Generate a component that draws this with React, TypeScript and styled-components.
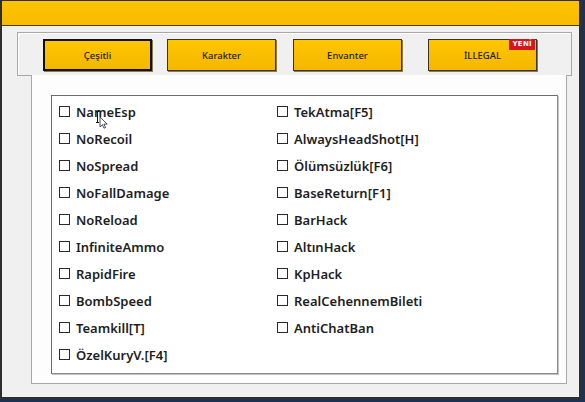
import styled, { createGlobalStyle } from 'styled-components';

const GlobalStyle = createGlobalStyle`
  html, body {
    margin: 0;
    padding: 0;
    background: #1f3153;
  }
  body {
    width: 585px;
    height: 402px;
    overflow: hidden;
    font-family: 'Noto Sans', 'DejaVu Sans', sans-serif;
  }
`;

type TabItem = { label: string; gap: number; active?: boolean; badge?: string };

const tabs: TabItem[] = [
  { label: 'Çeşitli', gap: 0, active: true },
  { label: 'Karakter', gap: 15 },
  { label: 'Envanter', gap: 17 },
  { label: 'İLLEGAL', gap: 26, badge: 'YENİ' },
];

const leftOptions = [
  'NameEsp',
  'NoRecoil',
  'NoSpread',
  'NoFallDamage',
  'NoReload',
  'InfiniteAmmo',
  'RapidFire',
  'BombSpeed',
  'Teamkill[T]',
  'ÖzelKuryV.[F4]',
];

const rightOptions = [
  'TekAtma[F5]',
  'AlwaysHeadShot[H]',
  'Ölümsüzlük[F6]',
  'BaseReturn[F1]',
  'BarHack',
  'AltınHack',
  'KpHack',
  'RealCehennemBileti',
  'AntiChatBan',
];

export default function App() {
  return (
    <>
      <GlobalStyle />
      <Window>
        <TitleBar />
        <Body>
          <TabHeader>
            {tabs.map((t) => (
              <TabButton key={t.label} $active={t.active} $gap={t.gap}>
                {t.label}
                {t.badge && <Badge>{t.badge}</Badge>}
              </TabButton>
            ))}
          </TabHeader>
          <Page>
            <Group>
              {[...leftOptions, ...rightOptions].map((name) => (
                <Option key={name}>
                  <Check />
                  <span>{name}</span>
                </Option>
              ))}
              {/* mouse pointer resting over the first option */}
              <Cursor width="14" height="20" viewBox="0 0 14 20">
                <path d="M1.5 1.5v11M0 1.5h3M0 12.5h3" stroke="#111" strokeWidth="1" fill="none" />
                <path d="M4 7v10l2.4-2.3 1.6 3.5 1.5-.7-1.6-3.4h3.3z" fill="#fff" stroke="#222" strokeWidth="0.8" />
              </Cursor>
            </Group>
          </Page>
        </Body>
      </Window>
    </>
  );
}

const Window = styled.div`
  box-sizing: border-box;
  width: 581px;
  height: 399px;
  display: flex;
  flex-direction: column;
  background: #f0f0f0;
  border: 2px solid #2e2e2e;
  border-top-width: 1px;
`;

const TitleBar = styled.div`
  height: 24px;
  flex: none;
  background: linear-gradient(#fec300, #f7bb00);
  border-bottom: 1px solid #4b3c10;
`;

const Body = styled.div`
  flex: 1;
  display: flex;
  flex-direction: column;
  padding: 6px 7px 13px 15px;
`;

const TabHeader = styled.div`
  box-sizing: border-box;
  height: 44px;
  flex: none;
  display: flex;
  align-items: flex-start;
  padding: 6px 0 0 25px;
  border: 1px solid #a8a8a8;
  box-shadow: inset 1px 1px 0 #ffffff;
`;

const TabButton = styled.div<{ $active?: boolean; $gap: number }>`
  position: relative;
  box-sizing: border-box;
  width: 109px;
  height: 32px;
  margin-left: ${({ $gap }) => $gap}px;
  display: flex;
  align-items: center;
  justify-content: center;
  background: linear-gradient(#ffc600, #f4b700);
  border: ${({ $active }) => ($active ? '2px solid #111' : '1px solid #3c3322')};
  box-shadow: 1px 1px 0 #8a7a50;
  font-size: 9.5px;
  font-weight: 500;
  color: #241d00;
`;

const Badge = styled.span`
  position: absolute;
  top: -1px;
  right: 1px;
  padding: 0 3px;
  height: 11px;
  line-height: 11px;
  background: #d6161c;
  color: #fff;
  font-family: 'DejaVu Sans', sans-serif;
  font-size: 7px;
  font-weight: bold;
  letter-spacing: 0.3px;
`;

const Page = styled.div`
  flex: 1;
  margin: -1px 5px 0 14px;
  display: flex;
  padding: 20px 8px 9px 19px;
  background: #fdfdfd;
  border: 1px solid #a8a8a8;
  border-top: none;
`;

const Group = styled.div`
  position: relative;
  flex: 1;
  display: grid;
  grid-template-columns: 218px 1fr;
  grid-template-rows: repeat(10, 27px);
  grid-auto-flow: column;
  align-content: start;
  padding: 2px 0 0 7px;
  background: #ffffff;
  border: 1px solid #6c6c6c;
  border-right-color: #8a8a8a;
  border-bottom-color: #8a8a8a;
  box-shadow: 1px 1px 0 #c4c4c4;
`;

const Option = styled.label`
  display: flex;
  align-items: center;
  gap: 6px;
  font-size: 13px;
  font-weight: 600;
  color: #1e1e1e;
`;

const Check = styled.span`
  box-sizing: border-box;
  width: 11px;
  height: 11px;
  flex: none;
  border: 1.5px solid #2a2a2a;
  background: #fff;
`;

const Cursor = styled.svg`
  position: absolute;
  left: 44px;
  top: 14px;
`;
